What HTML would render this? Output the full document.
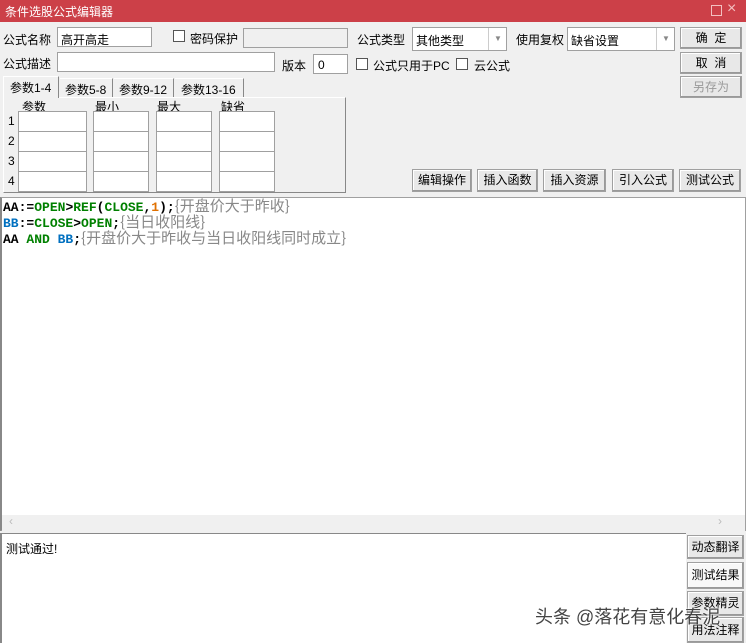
<!DOCTYPE html>
<html><head><meta charset="utf-8"><style>
*{box-sizing:border-box;margin:0;padding:0}
body{width:746px;height:643px;background:#f0f0f0;position:relative;overflow:hidden;font-family:"Liberation Sans","Microsoft YaHei","Noto Sans CJK SC",sans-serif;font-size:12px;color:#000}
.a{position:absolute;white-space:nowrap}
.in{position:absolute;background:#fff;border:1px solid #a0a0a0}
.cb{position:absolute;width:12px;height:12px;background:#fff;border:1px solid #555}
.btn{position:absolute;background:#e8e8e8;border:1px solid #a0a0a0;box-shadow:inset -1px -1px 0 #999,inset 1px 1px 0 #fff;text-align:center;font-size:12px}
.code{font-family:"Liberation Mono","DejaVu Sans Mono",monospace;font-weight:bold;font-size:13px;height:16px;line-height:16px;overflow:visible}
.g{color:#008000}.b{color:#0070c0}.o{color:#e07000}.c{color:#888;font-weight:normal;font-family:"Noto Sans CJK SC",sans-serif;font-size:15px;line-height:16px}
</style></head><body>
<div class="a" style="left:0;top:0;width:746px;height:22px;background:#cc4048"></div>
<div class="a" style="left:5px;top:3px;color:#fff;font-size:12px">条件选股公式编辑器</div>
<div class="a" style="left:711px;top:5px;width:11px;height:11px;border:1px solid #f3c0c0"></div>
<div class="a" style="left:727px;top:0px;color:#f3c0c0;font-size:16px">×</div>

<div class="a" style="left:3px;top:31px">公式名称</div>
<div class="in" style="left:57px;top:27px;width:95px;height:20px"></div>
<div class="a" style="left:61px;top:31px">高开高走</div>
<div class="cb" style="left:173px;top:30px"></div>
<div class="a" style="left:190px;top:30px">密码保护</div>
<div class="in" style="left:243px;top:28px;width:105px;height:20px;background:#f0f0f0"></div>
<div class="a" style="left:357px;top:31px">公式类型</div>
<div class="in" style="left:412px;top:27px;width:95px;height:24px"></div>
<div class="a" style="left:416px;top:32px">其他类型</div>
<div class="a" style="left:488px;top:28px;width:1px;height:22px;background:#ccc"></div>
<div class="a" style="left:494px;top:34px;color:#888;font-size:8px">▼</div>
<div class="a" style="left:516px;top:31px">使用复权</div>
<div class="in" style="left:567px;top:27px;width:108px;height:24px"></div>
<div class="a" style="left:571px;top:32px">缺省设置</div>
<div class="a" style="left:656px;top:28px;width:1px;height:22px;background:#ccc"></div>
<div class="a" style="left:662px;top:34px;color:#888;font-size:8px">▼</div>
<div class="btn" style="left:680px;top:27px;width:62px;height:22px;line-height:20px">确&nbsp;&nbsp;定</div>

<div class="a" style="left:3px;top:55px">公式描述</div>
<div class="in" style="left:57px;top:52px;width:218px;height:20px"></div>
<div class="a" style="left:282px;top:57px">版本</div>
<div class="in" style="left:313px;top:54px;width:35px;height:20px"></div>
<div class="a" style="left:318px;top:58px">0</div>
<div class="cb" style="left:356px;top:58px"></div>
<div class="a" style="left:373px;top:57px">公式只用于PC</div>
<div class="cb" style="left:456px;top:58px"></div>
<div class="a" style="left:474px;top:57px">云公式</div>
<div class="btn" style="left:680px;top:52px;width:62px;height:22px;line-height:20px">取&nbsp;&nbsp;消</div>
<div class="btn" style="left:680px;top:76px;width:62px;height:22px;line-height:20px;color:#999">另存为</div>

<div class="a" style="left:3px;top:97px;width:343px;height:96px;border:1px solid #fff;border-right-color:#888;border-bottom-color:#888"></div>
<div class="a" style="left:3px;top:76px;width:56px;height:22px;background:#f0f0f0;border-top:1px solid #fff;border-left:1px solid #fff;border-right:1px solid #888"></div>
<div class="a" style="left:10px;top:79px">参数1-4</div>
<div class="a" style="left:60px;top:78px;width:53px;height:19px;border-top:1px solid #fff;border-right:1px solid #888"></div>
<div class="a" style="left:65px;top:81px">参数5-8</div>
<div class="a" style="left:114px;top:78px;width:60px;height:19px;border-top:1px solid #fff;border-right:1px solid #888"></div>
<div class="a" style="left:119px;top:81px">参数9-12</div>
<div class="a" style="left:175px;top:78px;width:69px;height:19px;border-top:1px solid #fff;border-right:1px solid #888"></div>
<div class="a" style="left:181px;top:81px">参数13-16</div>
<div class="a" style="left:22px;top:98px">参数</div>
<div class="a" style="left:95px;top:98px">最小</div>
<div class="a" style="left:157px;top:98px">最大</div>
<div class="a" style="left:221px;top:98px">缺省</div>
<div class="a" style="left:8px;top:114px">1</div>
<div class="a" style="left:8px;top:134px">2</div>
<div class="a" style="left:8px;top:154px">3</div>
<div class="a" style="left:8px;top:174px">4</div>
<div class="in" style="left:18px;top:111px;width:69px;height:21px"></div><div class="in" style="left:93px;top:111px;width:56px;height:21px"></div><div class="in" style="left:156px;top:111px;width:56px;height:21px"></div><div class="in" style="left:219px;top:111px;width:56px;height:21px"></div>
<div class="in" style="left:18px;top:131px;width:69px;height:21px"></div><div class="in" style="left:93px;top:131px;width:56px;height:21px"></div><div class="in" style="left:156px;top:131px;width:56px;height:21px"></div><div class="in" style="left:219px;top:131px;width:56px;height:21px"></div>
<div class="in" style="left:18px;top:151px;width:69px;height:21px"></div><div class="in" style="left:93px;top:151px;width:56px;height:21px"></div><div class="in" style="left:156px;top:151px;width:56px;height:21px"></div><div class="in" style="left:219px;top:151px;width:56px;height:21px"></div>
<div class="in" style="left:18px;top:171px;width:69px;height:21px"></div><div class="in" style="left:93px;top:171px;width:56px;height:21px"></div><div class="in" style="left:156px;top:171px;width:56px;height:21px"></div><div class="in" style="left:219px;top:171px;width:56px;height:21px"></div>

<div class="btn" style="left:412px;top:169px;width:60px;height:23px;line-height:21px">编辑操作</div>
<div class="btn" style="left:477px;top:169px;width:61px;height:23px;line-height:21px">插入函数</div>
<div class="btn" style="left:543px;top:169px;width:63px;height:23px;line-height:21px">插入资源</div>
<div class="btn" style="left:612px;top:169px;width:62px;height:23px;line-height:21px">引入公式</div>
<div class="btn" style="left:679px;top:169px;width:62px;height:23px;line-height:21px">测试公式</div>

<div class="a" style="left:0;top:197px;width:746px;height:334px;background:#fff;border:1px solid #a0a0a0;border-left:2px solid #888"></div>
<div class="a code" style="left:3px;top:198px">AA:=<span class="g">OPEN</span>&gt;<span class="g">REF</span>(<span class="g">CLOSE</span>,<span class="o">1</span>);<span class="c">{开盘价大于昨收}</span></div>
<div class="a code" style="left:3px;top:214px"><span class="b">BB</span>:=<span class="g">CLOSE</span>&gt;<span class="g">OPEN</span>;<span class="c">{当日收阳线}</span></div>
<div class="a code" style="left:3px;top:230px">AA <span class="g">AND</span> <span class="b">BB</span>;<span class="c">{开盘价大于昨收与当日收阳线同时成立}</span></div>
<div class="a" style="left:2px;top:515px;width:743px;height:16px;background:#f0f0f0"></div>
<div class="a" style="left:9px;top:514px;color:#bbb;font-size:12px">‹</div>
<div class="a" style="left:718px;top:514px;color:#bbb;font-size:12px">›</div>

<div class="a" style="left:0;top:533px;width:686px;height:110px;background:#fff;border-top:1px solid #888;border-left:2px solid #888"></div>
<div class="a" style="left:6px;top:540px">测试通过!</div>
<div class="btn" style="left:687px;top:535px;width:57px;height:24px;line-height:22px">动态翻译</div>
<div class="btn" style="left:687px;top:562px;width:57px;height:27px;line-height:25px;background:#f8f8f8">测试结果</div>
<div class="btn" style="left:687px;top:591px;width:57px;height:25px;line-height:23px">参数精灵</div>
<div class="btn" style="left:687px;top:617px;width:57px;height:26px;line-height:24px">用法注释</div>
<div class="a" style="left:535px;top:603px;font-size:18px;color:#444;text-shadow:0 0 2px #fff,0 0 2px #fff">头条 @落花有意化春泥</div>
</body></html>
